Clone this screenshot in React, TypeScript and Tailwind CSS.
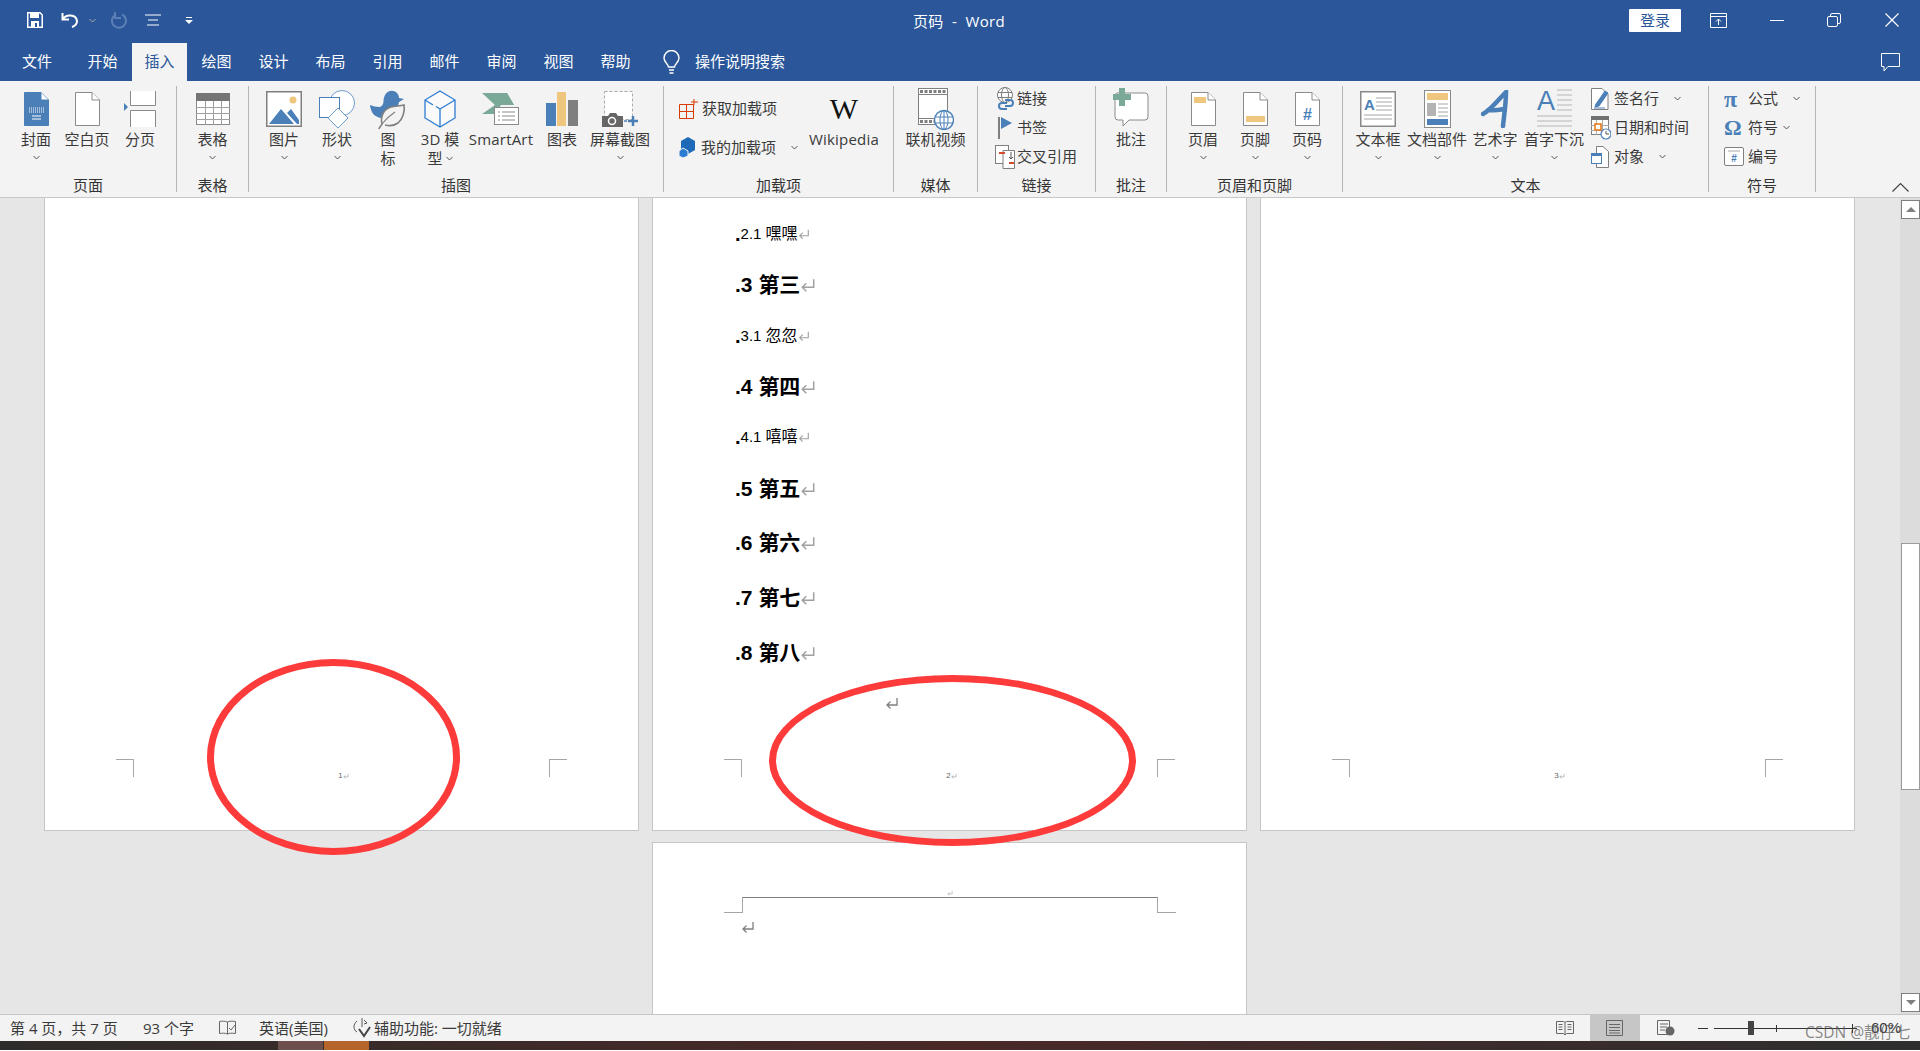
import type { ReactNode } from 'react';

const BLUE = '#4a7fb8';
const GRAY = '#7f7f7f';
const YELLOW = '#efc67e';
const GREEN = '#7aa998';

function Chevron({ className = '' }: { className?: string }) {
  return (
    <svg width="7" height="5" viewBox="0 0 7 5" className={className}>
      <path d="M.5 1l3 3 3-3" fill="none" stroke="#555" />
    </svg>
  );
}

function ReturnMark({ size = 14, color = '#8c8c8c' }: { size?: number; color?: string }) {
  return (
    <svg width={size} height={size} viewBox="0 0 14 14" className="shrink-0">
      <path d="M12 2v7H2M5.500 5.500L2 9l3.500 3.500" fill="none" stroke={color} strokeWidth="1.300" />
    </svg>
  );
}

function Doc({ w = 25, h = 34, fill = '#fff', stroke = '#8a8a8a', children }: { w?: number; h?: number; fill?: string; stroke?: string; children?: ReactNode }) {
  return (
    <svg width={w} height={h} viewBox={`0 0 ${w} ${h}`}>
      <path d={`M.5.5H${w - 8}L${w - 0.5} 8V${h - 0.5}H.5Z`} fill={fill} stroke={stroke} />
      <path d={`M${w - 8} .5V8H${w - 0.5}`} fill="#fff" stroke={stroke} />
      {children}
    </svg>
  );
}

const icons: Record<string, ReactNode> = {
  cover: (
    <Doc fill={BLUE} stroke={BLUE}>
      <path d="M5 16h15M5 18h15M5 20h15" stroke="#fff" strokeDasharray="1 1" />
      <path d="M8 24h9M8 27h9" stroke="#fff" />
    </Doc>
  ),
  blank: <Doc />,
  pagebreak: (
    <svg width="32" height="36" viewBox="0 0 32 36">
      <path d="M6.500 0V14.500H31.500V0" fill="#fff" stroke="#8a8a8a" />
      <path d="M6.500 36V19.500H31.500V36" fill="#fff" stroke="#8a8a8a" />
      <path d="M0 12l4 4-4 4z" fill={BLUE} />
    </svg>
  ),
  table: (
    <svg width="34" height="32" viewBox="0 0 34 32">
      <rect x=".5" y=".5" width="33" height="31" fill="#fff" stroke="#8a8a8a" />
      <rect width="34" height="8" fill="#757575" />
      <path d="M0 14.500h34M0 20.500h34M0 26.500h34M9.500 8v24M17.500 8v24M25.500 8v24" stroke="#a0a0a0" />
    </svg>
  ),
  picture: (
    <svg width="36" height="36" viewBox="0 0 36 36">
      <rect x=".75" y=".75" width="34.500" height="34.500" fill="#fff" stroke="#7f7f7f" strokeWidth="1.500" />
      <circle cx="27" cy="9" r="3.500" fill={YELLOW} />
      <path d="M3 33L15 18l13 15zM21 22l4-4 8 11v4h-2z" fill={BLUE} />
    </svg>
  ),
  shapes: (
    <svg width="38" height="38" viewBox="0 0 38 38">
      <circle cx="24" cy="13" r="12.500" fill="#fff" stroke="#6f9ccb" />
      <rect x="1.500" y="7.500" width="20" height="20" fill="#fff" stroke={BLUE} />
      <path d="M20 18l10 10-10 10-10-10z" fill="#fff" stroke="#6f9ccb" />
    </svg>
  ),
  icon: (
    <svg width="36" height="40" viewBox="0 0 36 40">
      <path d="M0 16c3 1 6 2 9 2 2 0 3-1 4-3 1-3 0-5 2-9 2-4 8-6 12-2 1 1 2 3 2 5l5 1-5 3c-1 5-3 8-8 11l-8 5c-4 0-9-2-11-6C1 21 0 18 0 16z" fill={BLUE} />
      <path d="M9 40c0-1 2-3 3-5-2-8 2-15 9-17 4-1 8-1 13-2 1 6-1 14-6 18-4 3-9 3-13 2" fill="#f3f3f3" stroke={GRAY} strokeWidth="1.600" />
      <path d="M12 35c3-4 7-8 13-12" fill="none" stroke={GRAY} strokeWidth="1.200" />
    </svg>
  ),
  cube: (
    <svg width="32" height="38" viewBox="0 0 32 38">
      <path d="M16 1l15 9v18l-15 9-15-9V10z" fill="#fafafa" stroke="#2b7cd3" strokeWidth="1.300" />
      <path d="M1 10l8 5M16 19v18M16 19l15-9M16 19l-4-2.500" fill="none" stroke="#2b7cd3" strokeWidth="1.300" />
    </svg>
  ),
  smartart: (
    <svg width="38" height="32" viewBox="0 0 38 32">
      <path d="M0 0h25l7 12H13zM13 12h6l-6 9H0z" fill={GREEN} />
      <path d="M7 0h18l7 12H13z" fill={GREEN} />
      <rect x="12.500" y="14.500" width="24" height="17" fill="#fff" stroke="#8a8a8a" />
      <path d="M16 19h2M20 19h13M16 23h2M20 23h13M16 27h2M20 27h13" stroke="#8a8a8a" />
    </svg>
  ),
  chart: (
    <svg width="32" height="34" viewBox="0 0 32 34">
      <rect y="11" width="10" height="23" fill={BLUE} />
      <rect x="11" width="9" height="34" fill={YELLOW} />
      <rect x="22" y="8" width="10" height="26" fill={GRAY} />
    </svg>
  ),
  screenshot: (
    <svg width="36" height="36" viewBox="0 0 36 36">
      <rect x="2.500" y=".5" width="28" height="28" fill="#fff" stroke="#aaa" strokeDasharray="3 2" />
      <path d="M0 25h6l2-3h6l2 3h5v11H0z" fill="#666" />
      <circle cx="10" cy="30" r="3.500" fill="none" stroke="#fff" strokeWidth="1.500" />
      <path d="M22 30h3" stroke={BLUE} strokeWidth="1.500" />
      <path d="M31 25v10M26 30h10" stroke={BLUE} strokeWidth="2.500" />
    </svg>
  ),
  getaddin: (
    <svg width="20" height="20" viewBox="0 0 20 20">
      <path d="M.5 5.500h14v14H.5zM.5 12.500h14M7.500 5.500v14" fill="none" stroke="#d83b01" />
      <path d="M15 0v6M12 3h7" stroke="#d83b01" />
    </svg>
  ),
  myaddin: (
    <svg width="17" height="21" viewBox="0 0 17 21">
      <path d="M9 0l7 4v9l-7 4-7-4V4z" fill="#1e6ab8" />
      <path d="M4 11l5 3v5l-5 2-4-2v-5z" fill="#2b7cd3" stroke="#f3f3f3" />
    </svg>
  ),
  video: (
    <svg width="36" height="42" viewBox="0 0 36 42">
      <rect x=".5" y=".5" width="29" height="36" fill="#fff" stroke="#7f7f7f" />
      <path d="M0 6.500h30M0 30.500h30" stroke="#7f7f7f" />
      <path d="M2 3.500h26M2 33.500h26" stroke="#7f7f7f" strokeWidth="3" strokeDasharray="3 1.500" />
      <circle cx="26" cy="32" r="9.500" fill="#fff" stroke={BLUE} strokeWidth="1.400" />
      <ellipse cx="26" cy="32" rx="4" ry="9.500" fill="none" stroke={BLUE} />
      <path d="M17 29h18M17 35h18M26 22v20" stroke={BLUE} />
    </svg>
  ),
  link: (
    <svg width="19" height="24" viewBox="0 0 19 24">
      <circle cx="9" cy="8" r="7.500" fill="#fff" stroke={GRAY} />
      <ellipse cx="9" cy="8" rx="3.500" ry="7.500" fill="none" stroke={GRAY} />
      <path d="M2 5.500h14M2 10.500h14" stroke={GRAY} />
      <path d="M11 16H6a3 3 0 000 6h5M9 13h5a3 3 0 010 6H9" fill="none" stroke={BLUE} strokeWidth="2" />
    </svg>
  ),
  bookmark: (
    <svg width="14" height="22" viewBox="0 0 14 22">
      <rect width="2" height="22" fill={GRAY} />
      <path d="M3 0l11 6-11 6z" fill={BLUE} />
    </svg>
  ),
  crossref: (
    <svg width="20" height="24" viewBox="0 0 20 24">
      <rect x=".5" y=".5" width="13" height="18" fill="#fff" stroke={GRAY} />
      <path d="M8 5.500h11.500v18H8z" fill="#fff" stroke={GRAY} />
      <path d="M4 8h6" stroke="#d9492c" strokeWidth="2" />
      <path d="M14 18h5" stroke="#d9492c" strokeWidth="2" />
      <path d="M16 7v7M14 12l2 2 2-2" fill="none" stroke="#555" />
    </svg>
  ),
  comment: (
    <svg width="36" height="42" viewBox="0 0 36 42">
      <path d="M4 6h28a3 3 0 013 3v21a3 3 0 01-3 3H16l-6 6v-6H5a3 3 0 01-3-3V9a3 3 0 012-3z" fill="#fff" stroke="#8a8a8a" transform="translate(0 -1)" />
      <path d="M6 0h6v6h6v6h-6v6H6v-6H0V6h6z" fill={GREEN} />
    </svg>
  ),
  header: (
    <Doc>
      <rect x="3" y="5" width="12" height="6" fill={YELLOW} />
    </Doc>
  ),
  footer: (
    <Doc>
      <rect x="3" y="24" width="19" height="6" fill={YELLOW} />
    </Doc>
  ),
  pagenum: (
    <Doc>
      <text x="12.500" y="28" textAnchor="middle" fontSize="16" fontWeight="700" fontFamily="Liberation Sans" fill={BLUE}>#</text>
    </Doc>
  ),
  textbox: (
    <svg width="36" height="36" viewBox="0 0 36 36">
      <rect x=".75" y=".75" width="34.500" height="34.500" fill="#fff" stroke="#8a8a8a" strokeWidth="1.500" />
      <text x="4" y="19" fontSize="15" fontWeight="700" fontFamily="Liberation Sans" fill={BLUE}>A</text>
      <path d="M16 7h16M16 11h16M16 15h16M16 19h16M4 24h28M4 28h28" stroke="#a6a6a6" />
    </svg>
  ),
  quickparts: (
    <svg width="27" height="38" viewBox="0 0 27 38">
      <rect x=".5" y=".5" width="26" height="37" fill="#fff" stroke="#8a8a8a" />
      <rect x="3" y="3" width="21" height="7" fill={YELLOW} />
      <rect x="3" y="13" width="9" height="13" fill="#b3b3b3" />
      <path d="M14 14h10M14 18h10M14 22h10M14 26h10" stroke="#a6a6a6" />
      <rect x="3" y="29" width="21" height="6" fill={BLUE} />
    </svg>
  ),
  wordart: (
    <svg width="28" height="38" viewBox="0 0 28 38">
      <path d="M2 24C10 20 18 9 25 2c0 12-2 24-3 34M7 20c5 1 11 0 16-1" fill="none" stroke={BLUE} strokeWidth="4.500" strokeLinecap="round" />
    </svg>
  ),
  dropcap: (
    <svg width="35" height="40" viewBox="0 0 35 40">
      <text x="0" y="21" fontSize="27" fontFamily="Liberation Sans" fill={BLUE}>A</text>
      <path d="M20 1h15M20 6h15M20 11h15M20 16h15M20 21h15M0 27h35M0 32h35M0 37h35" stroke="#b5b5b5" />
    </svg>
  ),
  signature: (
    <svg width="18" height="22" viewBox="0 0 18 22">
      <path d="M.5.500H11l6 6v15H.5z" fill="#fff" stroke={GRAY} />
      <path d="M5 16L14 3l3 2-9 13-4 1zM3 20h11" fill={BLUE} stroke={BLUE} />
    </svg>
  ),
  datetime: (
    <svg width="20" height="24" viewBox="0 0 20 24">
      <rect x=".5" y=".5" width="17" height="18" fill="#fff" stroke={GRAY} />
      <rect width="18" height="4" fill="#707070" />
      <path d="M0 9.500h18M0 14.500h18M5.500 4v15M11.500 4v15" stroke="#aaa" />
      <rect x="4" y="8" width="6" height="6" fill="#fff" stroke="#e8760c" strokeWidth="1.500" />
      <circle cx="15" cy="18" r="5" fill="#fff" stroke={BLUE} strokeWidth="1.200" />
      <path d="M15 15v3h3" fill="none" stroke="#555" />
    </svg>
  ),
  object: (
    <svg width="18" height="22" viewBox="0 0 18 22">
      <path d="M5.500.500H12l5.500 5v16h-12z" fill="#fff" stroke={GRAY} />
      <rect x=".5" y="7.500" width="10" height="10" fill="#fff" stroke={BLUE} />
      <rect y="7" width="11" height="3" fill={BLUE} />
    </svg>
  ),
  numbering: (
    <svg width="20" height="19" viewBox="0 0 20 19">
      <rect x=".5" y=".5" width="19" height="18" rx="1.500" fill="#fff" stroke={GRAY} />
      <path d="M4 4h12" stroke="#aaa" />
      <text x="10" y="15" textAnchor="middle" fontSize="10" fontWeight="700" fontFamily="Liberation Sans" fill={BLUE}>#</text>
    </svg>
  ),
};

function Large({ icon, w, lines, chevron = true, latin }: { icon: string; w: number; lines: string[]; chevron?: boolean; latin?: boolean }) {
  return (
    <div className="flex shrink-0 flex-col items-center" style={{ width: w }}>
      <div className="flex h-[43px] items-center justify-center">{icons[icon]}</div>
      <div className={`whitespace-nowrap text-center leading-[19px] ${latin ? 'tracking-[0.2px]' : ''}`}>
        {lines.map((line, i) => (
          <div key={i} className="flex h-[19px] items-center justify-center gap-[3px]">
            {line}
            {chevron && lines.length > 1 && i === lines.length - 1 && <Chevron />}
          </div>
        ))}
      </div>
      {chevron && lines.length === 1 && <Chevron className="mt-[6px]" />}
    </div>
  );
}

function Small({ icon, text, iconW = 24 }: { icon: ReactNode; text: string; iconW?: number }) {
  return (
    <div className="flex h-[29px] items-center whitespace-nowrap">
      <div className="flex shrink-0 items-center justify-center" style={{ width: iconW }}>{icon}</div>
      {text}
    </div>
  );
}

function Group({ w, label, className = '', children }: { w: number; label: string; className?: string; children: ReactNode }) {
  return (
    <div className="flex h-full shrink-0" style={{ width: w }}>
      <div className="flex min-w-0 flex-1 flex-col">
        <div className={`flex h-[94px] ${className}`}>{children}</div>
        <div className="flex h-[21px] items-center justify-center text-[#333]">{label}</div>
      </div>
      <div className="my-[5px] h-[106px] w-px shrink-0 bg-[#b5b5b5]" />
    </div>
  );
}

function Ribbon() {
  return (
    <div className="relative flex h-[117px] border-b border-[#c8c8c8] bg-[#f3f3f3] text-[15px] text-[#3a3a3a]">
      <Group w={177} label="页面" className="pl-[12px] pt-[6px]">
        <Large icon="cover" w={48} lines={['封面']} />
        <Large icon="blank" w={54} lines={['空白页']} chevron={false} />
        <Large icon="pagebreak" w={52} lines={['分页']} chevron={false} />
      </Group>
      <Group w={72} label="表格" className="justify-center pt-[6px]">
        <Large icon="table" w={70} lines={['表格']} />
      </Group>
      <Group w={415} label="插图" className="pl-[9px] pt-[6px]">
        <Large icon="picture" w={52} lines={['图片']} />
        <Large icon="shapes" w={54} lines={['形状']} />
        <Large icon="icon" w={48} lines={['图', '标']} chevron={false} />
        <Large icon="cube" w={56} lines={['3D 模', '型']} />
        <Large icon="smartart" w={66} lines={['SmartArt']} chevron={false} latin />
        <Large icon="chart" w={56} lines={['图表']} chevron={false} />
        <Large icon="screenshot" w={60} lines={['屏幕截图']} />
      </Group>
      <Group w={230} label="加载项" className="pl-[15px] pt-[6px]">
        <div className="w-[131px] pt-[2px]">
          <div className="flex h-[39px] items-center gap-[3px]">{icons.getaddin}获取加载项</div>
          <div className="flex h-[39px] items-center">
            <span className="w-[22px] shrink-0">{icons.myaddin}</span>
            我的加载项
            <Chevron className="ml-[15px]" />
          </div>
        </div>
        <div className="flex w-[68px] flex-col items-center">
          <div className="flex h-[43px] items-center font-['Liberation_Serif'] text-[30px] font-normal text-[#111]">W</div>
          <div className="h-[19px] leading-[19px] tracking-[0.2px]">Wikipedia</div>
        </div>
      </Group>
      <Group w={84} label="媒体" className="justify-center pt-[6px]">
        <Large icon="video" w={70} lines={['联机视频']} chevron={false} />
      </Group>
      <Group w={118} label="链接" className="flex-col pl-[15px] pt-[3px]">
        <Small icon={icons.link} text="链接" />
        <Small icon={icons.bookmark} text="书签" />
        <Small icon={icons.crossref} text="交叉引用" />
      </Group>
      <Group w={71} label="批注" className="justify-center pt-[6px]">
        <Large icon="comment" w={60} lines={['批注']} chevron={false} />
      </Group>
      <Group w={176} label="页眉和页脚" className="pl-[10px] pt-[6px]">
        <Large icon="header" w={52} lines={['页眉']} />
        <Large icon="footer" w={52} lines={['页脚']} />
        <Large icon="pagenum" w={52} lines={['页码']} />
      </Group>
      <Group w={366} label="文本" className="pl-[6px] pt-[6px]">
        <Large icon="textbox" w={58} lines={['文本框']} />
        <Large icon="quickparts" w={60} lines={['文档部件']} />
        <Large icon="wordart" w={56} lines={['艺术字']} />
        <Large icon="dropcap" w={62} lines={['首字下沉']} />
        <div className="mt-[-3px] flex flex-col pl-[6px]">
          <div className="flex h-[29px] items-center whitespace-nowrap">
            <span className="w-[23px] shrink-0">{icons.signature}</span>签名行<Chevron className="ml-[15px]" />
          </div>
          <div className="flex h-[29px] items-center whitespace-nowrap">
            <span className="w-[23px] shrink-0">{icons.datetime}</span>日期和时间
          </div>
          <div className="flex h-[29px] items-center whitespace-nowrap">
            <span className="w-[23px] shrink-0">{icons.object}</span>对象<Chevron className="ml-[15px]" />
          </div>
        </div>
      </Group>
      <Group w={107} label="符号" className="flex-col pl-[15px] pt-[3px]">
        <div className="flex h-[29px] items-center">
          <span className="w-[24px] shrink-0 font-['Liberation_Serif'] text-[24px] leading-none font-bold text-[#4a7fb8]">π</span>公式<Chevron className="ml-[15px]" />
        </div>
        <div className="flex h-[29px] items-center">
          <span className="w-[24px] shrink-0 font-['Liberation_Serif'] text-[22px] leading-none font-bold text-[#4a7fb8]">Ω</span>符号<Chevron className="ml-[5px]" />
        </div>
        <div className="flex h-[29px] items-center">
          <span className="w-[24px] shrink-0">{icons.numbering}</span>编号
        </div>
      </Group>
      <svg width="17" height="10" viewBox="0 0 17 10" className="absolute left-[1892px] top-[101px]">
        <path d="M.5 9.500L8.500 1.500l8 8" fill="none" stroke="#444" strokeWidth="1.200" />
      </svg>
    </div>
  );
}

function TitleBar() {
  return (
    <div className="relative flex h-[43px] items-center bg-[#2b579a] pb-[3px] text-[15px] text-white">
      <div className="flex items-center pl-[27px]">
        <svg width="16" height="16" viewBox="0 0 16 16">
          <path d="M.75.750H13l2.250 2.250v12.250H.75z" fill="none" stroke="#fff" strokeWidth="1.500" />
          <rect x="3" y="1" width="9" height="5" fill="#fff" />
          <rect x="4" y="9" width="8" height="6" fill="#fff" />
          <rect x="8" y="11" width="2" height="4" fill="#2b579a" />
        </svg>
        <svg width="18" height="18" viewBox="0 0 18 18" className="ml-[18px]">
          <path d="M2 8c3-5 13-5 14 2 0 3-2 5-5 6M1.500 2v6.500H8" fill="none" stroke="#fff" strokeWidth="2" />
        </svg>
        <Chevron className="ml-[10px] invert" />
        <svg width="17" height="18" viewBox="0 0 17 18" className="ml-[14px]">
          <path d="M5 3a7 7 0 107-.5M5 0v6h6" fill="none" stroke="#5c7fb5" strokeWidth="2" transform="translate(0 1)" />
        </svg>
        <svg width="16" height="12" viewBox="0 0 16 12" className="ml-[18px]">
          <path d="M0 1h16M3 6h10M2 11h12" stroke="#fff" />
        </svg>
        <svg width="8" height="7" viewBox="0 0 8 7" className="ml-[24px]">
          <path d="M1 0h6v1H1zM0 3h8L4 7z" fill="#fff" />
        </svg>
      </div>
      <div className="absolute left-[913px] top-[9px] whitespace-pre leading-[24px] tracking-[0.3px]">页码  -  Word</div>
      <div className="ml-auto flex items-center">
        <div className="flex h-[23px] w-[52px] items-center justify-center rounded-[1px] bg-white text-[#2b579a]">登录</div>
        <svg width="17" height="15" viewBox="0 0 17 15" className="ml-[29px]">
          <path d="M.5.500h16v14H.5zM.5 3.500h16M8.500 12V6M6 8.500l2.500-2.500 2.500 2.500" fill="none" stroke="#fff" />
        </svg>
        <div className="ml-[43px] h-px w-[14px] bg-white" />
        <svg width="14" height="14" viewBox="0 0 14 14" className="ml-[43px]">
          <rect x=".5" y="3.500" width="10" height="10" rx="1.500" fill="none" stroke="#fff" />
          <path d="M3.500 3V2a1.500 1.500 0 011.500-1.500h7A1.500 1.500 0 0113.500 2v7a1.500 1.500 0 01-1.500 1.500h-1" fill="none" stroke="#fff" />
        </svg>
        <svg width="14" height="14" viewBox="0 0 14 14" className="ml-[44px] mr-[21px]">
          <path d="M.5.500l13 13M13.500.500l-13 13" stroke="#fff" strokeWidth="1.200" />
        </svg>
      </div>
    </div>
  );
}

const tabs = ['开始', '插入', '绘图', '设计', '布局', '引用', '邮件', '审阅', '视图', '帮助'];

function TabBar() {
  return (
    <div className="flex h-[38px] items-stretch bg-[#2b579a] pb-px text-[15px] text-white">
      <div className="flex w-[74px] items-center justify-center">文件</div>
      {tabs.map((t) => (
        <div
          key={t}
          className={`mx-px mb-[-1px] flex w-[55px] items-center justify-center pb-px ${t === '插入' ? 'bg-[#f3f3f3] text-[#2b579a]' : ''}`}
        >
          {t}
        </div>
      ))}
      <svg width="17" height="25" viewBox="0 0 17 25" className="ml-[19px] mt-[7px]">
        <path d="M5.500 17c0-3-4.500-4.500-4.500-9a7.500 7.500 0 0115 0c0 4.500-4.500 6-4.500 9zM6 20h5M6.500 23h4" fill="none" stroke="#fff" strokeWidth="1.400" />
      </svg>
      <div className="ml-[15px] flex items-center">操作说明搜索</div>
      <svg width="19" height="20" viewBox="0 0 19 20" className="ml-auto mr-[20px] mt-[10px]">
        <path d="M.5.500h18v13H7l-4 4.500v-4.500H.5z" fill="none" stroke="#fff" />
      </svg>
    </div>
  );
}

function Corner({ side }: { side: 'left' | 'right' }) {
  return (
    <div className={`h-[18px] w-[18px] border-t border-[#a6a6a6] ${side === 'left' ? 'border-r' : 'border-l'}`} />
  );
}

function PageFooter({ n }: { n: number }) {
  return (
    <div className="flex h-[71px] shrink-0 items-start justify-between pl-[71px] pr-[71px]">
      <Corner side="left" />
      <div className="flex items-center pl-[4px] pt-[13px] font-['Liberation_Sans'] text-[8px] leading-[8px] text-[#666]">
        {n}
        <ReturnMark size={6} />
      </div>
      <Corner side="right" />
    </div>
  );
}

type Row = { num: string; text: string; big: boolean; mt: string };

const rows: Row[] = [
  { num: '2.1', text: '嘿嘿', big: false, mt: 'mt-0' },
  { num: '3', text: '第三', big: true, mt: 'mt-px' },
  { num: '3.1', text: '忽忽', big: false, mt: 'mt-px' },
  { num: '4', text: '第四', big: true, mt: 'mt-px' },
  { num: '4.1', text: '嘻嘻', big: false, mt: 'mt-0' },
  { num: '5', text: '第五', big: true, mt: 'mt-[2px]' },
  { num: '6', text: '第六', big: true, mt: 'mt-[4px]' },
  { num: '7', text: '第七', big: true, mt: 'mt-[5px]' },
  { num: '8', text: '第八', big: true, mt: 'mt-[5px]' },
];

function Headings() {
  return (
    <div className="flex-1 pl-[82px] pt-[11px] font-['Liberation_Sans','Noto_Sans_CJK_SC',sans-serif] text-black">
      {rows.map((r) => (
        <div key={r.num} className={`flex h-[50px] items-center ${r.mt}`}>
          {r.big ? (
            <span className="flex items-center whitespace-pre text-[21px] font-bold">
              .{r.num} {r.text}
              <ReturnMark size={16} color="#a0a0a0" />
            </span>
          ) : (
            <span className="flex items-center whitespace-pre text-[15px]">
              <b className="text-[20px] leading-none">.</b>
              {r.num} <span className="text-[16px]">{r.text}</span>
              <ReturnMark size={12} color="#a0a0a0" />
            </span>
          )}
        </div>
      ))}
      <div className="pl-[150px] pt-[18px]">
        <ReturnMark size={14} color="#7f7f7f" />
      </div>
    </div>
  );
}

function Page({ children }: { children: ReactNode }) {
  return <div className="flex h-[633px] flex-col border-x border-b border-[#c6c6c6] bg-white">{children}</div>;
}

function LastPage() {
  return (
    <div className="h-[300px] border border-[#c6c6c6] bg-white pl-[71px] pr-[70px] pt-[45px]">
      <div className="flex h-[9px] items-center justify-center">
        <ReturnMark size={6} color="#999" />
      </div>
      <div className="flex">
        <div className="h-[16px] w-[18px] border-b border-[#a6a6a6]" />
        <div className="h-[16px] flex-1 border-x border-t border-x-[#a6a6a6] border-t-[#7f7f7f]" />
        <div className="h-[16px] w-[18px] border-b border-[#a6a6a6]" />
      </div>
      <div className="pl-[17px] pt-[7px]">
        <ReturnMark size={14} color="#7f7f7f" />
      </div>
    </div>
  );
}

function ScrollBar() {
  return (
    <div className="flex w-[20px] shrink-0 flex-col items-stretch bg-[#dcdcdc] py-[2px] pl-px">
      <div className="flex h-[19px] items-center justify-center border border-[#7f7f7f] bg-white">
        <div className="h-0 w-0 border-x-[5px] border-b-[5px] border-x-transparent border-b-[#7f7f7f]" />
      </div>
      <div className="mt-[324px] h-[247px] border border-[#9a9a9a] bg-white" />
      <div className="mt-auto flex h-[19px] items-center justify-center border border-[#7f7f7f] bg-white">
        <div className="h-0 w-0 border-x-[5px] border-t-[5px] border-x-transparent border-t-[#7f7f7f]" />
      </div>
    </div>
  );
}

function Document() {
  return (
    <div className="relative flex h-[816px] overflow-hidden bg-[#e6e6e6]">
      <div className="min-w-0 flex-1 pl-[44px]">
        <div className="grid grid-cols-[595px_595px_595px] gap-x-[13px] gap-y-[11px]">
          <Page>
            <div className="flex-1" />
            <PageFooter n={1} />
          </Page>
          <Page>
            <Headings />
            <PageFooter n={2} />
          </Page>
          <Page>
            <div className="flex-1" />
            <PageFooter n={3} />
          </Page>
          <div />
          <LastPage />
        </div>
      </div>
      <ScrollBar />
      {/* red marks drawn over the screenshot */}
      <div className="absolute left-[207px] top-[461px] h-[196px] w-[253px] rounded-[50%] border-[7px] border-[#fd3b3b]" />
      <div className="absolute left-[769px] top-[477px] h-[171px] w-[367px] rounded-[50%] border-[7px] border-[#fd3b3b]" />
    </div>
  );
}

function StatusBar() {
  return (
    <div className="relative flex h-[27px] items-center border-t border-[#c6c6c6] bg-[#f3f3f3] pl-[10px] text-[15px] text-[#3a3a3a]">
      <span className="w-[133px] whitespace-pre">第 4 页，共 7 页</span>
      <span className="w-[76px] whitespace-pre">93 个字</span>
      <svg width="18" height="16" viewBox="0 0 18 16">
        <path d="M8.500 2C6 1 3 1 .5 1.500v12c3-.5 5.500-.5 8 .5 2-1 4-1 8-.5v-12c-3-.5-6-.5-8 .5zM8.500 2v12" fill="none" stroke="#666" />
        <path d="M10 8l2 2 4-5" fill="none" stroke="#666" />
      </svg>
      <span className="ml-[22px] w-[93px] whitespace-nowrap">英语(美国)</span>
      <svg width="20" height="20" viewBox="0 0 20 20">
        <path d="M5 3C1 6 1 12 5 14M12 2l3 3-3 1M10 0v9" fill="none" stroke="#555" />
        <path d="M7 11l5 7 6-9" fill="none" stroke="#444" strokeWidth="2" />
      </svg>
      <span className="ml-[2px] whitespace-nowrap">辅助功能: 一切就绪</span>

      <div className="ml-auto flex h-full items-center">
        <svg width="18" height="16" viewBox="0 0 18 16">
          <path d="M.5 1.500h7l1.500 1 1.500-1h7v12h-7L9 15l-1.500-1.500h-7zM9 2.500V15M2.500 4.500h4M2.500 7h4M2.500 9.500h4M11.500 4.500h4M11.500 7h4M11.500 9.500h4" fill="none" stroke="#666" />
        </svg>
        <div className="ml-[16px] flex h-full w-[50px] items-center justify-center bg-[#c6c6c6]">
          <svg width="17" height="16" viewBox="0 0 17 16">
            <path d="M.5.500h16v15H.5zM3 4.500h11M3 7.500h11M3 10.500h11M3 13h11" fill="none" stroke="#666" />
          </svg>
        </div>
        <svg width="18" height="16" viewBox="0 0 18 16" className="ml-[17px]">
          <path d="M.5.500h12v14H.5zM3 4h8M3 7h7M3 10h5" fill="none" stroke="#666" />
          <circle cx="13" cy="11" r="4.500" fill="#666" />
        </svg>
        <div className="ml-[23px] h-px w-[10px] bg-[#333]" />
        <div className="relative ml-[6px] h-px w-[136px] bg-[#333]">
          <div className="absolute left-[34px] top-[-7px] h-[14px] w-[6px] bg-[#444]" />
          <div className="absolute left-[62px] top-[-3px] h-[7px] w-px bg-[#333]" />
        </div>
        <div className="relative ml-[-2px] h-[9px] w-[9px]">
          <div className="absolute left-0 top-[4px] h-px w-[9px] bg-[#333]" />
          <div className="absolute left-[4px] top-0 h-[9px] w-px bg-[#333]" />
        </div>
        <span className="ml-[14px] mr-[19px] font-['Liberation_Sans'] text-[15px]">60%</span>
      </div>
      <span className="absolute left-[1805px] top-[6px] whitespace-nowrap text-[15.500px] text-[#555]/70">CSDN @靓仔七</span>
    </div>
  );
}

export default function App() {
  return (
    <div className="h-[1051px] w-[1920px] overflow-hidden font-['Open_Sans','Noto_Sans_CJK_SC',sans-serif]">
      <TitleBar />
      <TabBar />
      <Ribbon />
      <Document />
      <StatusBar />
      <div className="relative h-[9px] bg-linear-to-r from-[#2e2c2a] via-[#4a2828] to-[#2e2e2e]">
        <div className="absolute left-[278px] top-0 h-full w-[45px] bg-[#6d4f4d]" />
        <div className="absolute left-[324px] top-0 h-full w-[45px] bg-[#b5652a]" />
      </div>
    </div>
  );
}
